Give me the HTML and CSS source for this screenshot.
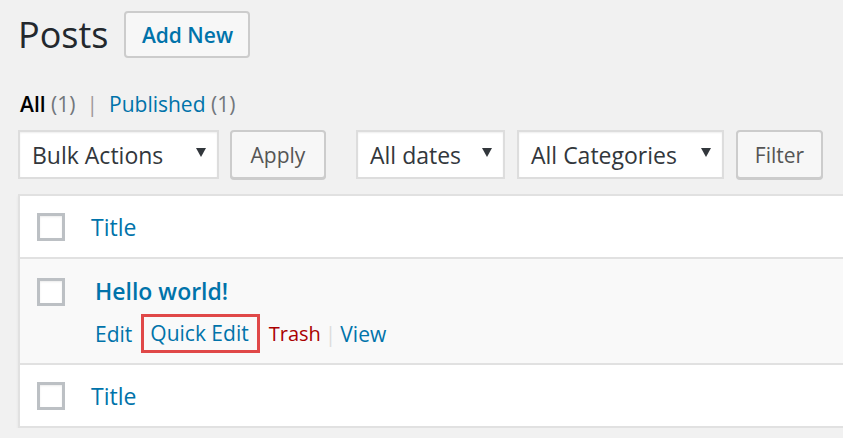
FILE: index.html
```html
<!DOCTYPE html>
<html>
<head>
<meta charset="utf-8">
<link rel="stylesheet" href="styles.css">
</head>
<body>
<div class="wrap">
  <div class="head">
    <h1 class="title">Posts</h1>
    <a class="btn btn-add">Add New</a>
  </div>
  <ul class="subsub">
    <li><span class="current">All</span> <span class="count">(1)</span></li>
    <li class="sep">|</li>
    <li><a class="link">Published <span class="count">(1)</span></a></li>
  </ul>
  <div class="nav">
    <div class="select w-bulk"><span>Bulk Actions</span><svg class="arrow" width="10" height="9" viewBox="0 0 10 9"><path d="M0 0H10L5 9Z" fill="#32373c"/></svg></div>
    <a class="btn btn-apply">Apply</a>
    <div class="select w-dates"><span>All dates</span><svg class="arrow" width="10" height="9" viewBox="0 0 10 9"><path d="M0 0H10L5 9Z" fill="#32373c"/></svg></div>
    <div class="select w-cats"><span>All Categories</span><svg class="arrow" width="10" height="9" viewBox="0 0 10 9"><path d="M0 0H10L5 9Z" fill="#32373c"/></svg></div>
    <a class="btn btn-filter">Filter</a>
  </div>
  <div class="table">
    <div class="row row-head">
      <span class="cb"></span>
      <a class="col-title">Title</a>
    </div>
    <div class="row row-post">
      <span class="cb"></span>
      <div class="post-main">
        <a class="row-title">Hello world!</a>
        <div class="actions">
          <a class="act">Edit</a>
          <a class="act act-quick">Quick Edit</a>
          <a class="act act-trash">Trash</a>
          <span class="act-sep">|</span>
          <a class="act">View</a>
        </div>
      </div>
    </div>
    <div class="row row-head">
      <span class="cb"></span>
      <a class="col-title">Title</a>
    </div>
  </div>
</div>
</body>
</html>
```

FILE: styles.css
```css
html, body {
  margin: 0;
  padding: 0;
  background: #f1f1f1;
  overflow: hidden;
}
body {
  font-family: "Open Sans", "Noto Sans", sans-serif;
  color: #23282d;
}
.wrap {
  padding: 11px 0 0 18px;
}
.head {
  display: flex;
  align-items: center;
  height: 47px;
}
.title {
  margin: 0 16px 0 0;
  font-size: 36px;
  font-weight: 400;
  line-height: 1;
  color: #23282d;
}
.btn {
  box-sizing: border-box;
  display: flex;
  align-items: center;
  justify-content: center;
  background: #f7f7f7;
  border: 2px solid #cccccc;
  border-radius: 4px;
  text-decoration: none;
}
.btn-add {
  width: 126px;
  height: 47px;
  font-size: 21px;
  font-weight: 600;
  color: #0073aa;
}
.subsub {
  list-style: none;
  margin: 32px 0 0 2px;
  padding: 0;
  display: flex;
  gap: 10px;
  font-size: 21px;
  line-height: 29px;
}
.subsub li {
  white-space: pre;
}
.current {
  font-weight: 600;
  color: #000;
}
.count {
  color: #72777c;
}
.subsub .sep {
  color: #a09a9a;
  margin: 0 1px;
}
.link {
  color: #0073aa;
}
.link .count {
  color: #72777c;
}
.nav {
  display: flex;
  margin-top: 11px;
  height: 50px;
}
.select {
  box-sizing: border-box;
  height: 49px;
  background: #fff;
  border: 2px solid #dddddd;
  box-shadow: inset 0 1px 2px rgba(0,0,0,.07);
  display: flex;
  align-items: center;
  justify-content: space-between;
  padding: 0 11px 0 12px;
  font-size: 23px;
  color: #32373c;
}
.arrow {
  margin-top: -4px;
}
.w-bulk { width: 201px; }
.w-dates { width: 149px; margin-left: 30px; }
.w-cats { width: 207px; margin-left: 12px; }
.btn-apply, .btn-filter {
  height: 49px;
  font-size: 21px;
  color: #555;
  box-shadow: 0 1px 0 #cccccc;
}
.btn-apply { width: 96px; margin-left: 11px; }
.btn-filter { width: 87px; margin-left: 12px; }
.table {
  margin-top: 14px;
  margin-right: -40px;
  background: #fff;
  border: 2px solid #e1e1e1;
  border-right: none;
  box-shadow: 0 2px 3px rgba(0,0,0,.06);
}
.row {
  display: flex;
  padding-left: 17px;
}
.row-head {
  height: 61px;
  align-items: center;
}
.cb {
  box-sizing: border-box;
  width: 28px;
  height: 28px;
  flex: none;
  border: 3px solid #bcc0c4;
  background: #fff;
  box-shadow: inset 0 1px 2px rgba(0,0,0,.08);
}
.col-title {
  margin-left: 26px;
  font-size: 23px;
  color: #0073aa;
}
.row-post {
  background: #f9f9f9;
  border-top: 2px solid #e1e1e1;
  border-bottom: 2px solid #e1e1e1;
  padding-top: 19px;
  box-sizing: content-box;
  height: 85px;
}
.post-main {
  margin-left: 30px;
  margin-top: -3px;
}
.row-title {
  display: block;
  font-size: 23px;
  font-weight: 600;
  color: #0073aa;
  line-height: 32px;
}
.actions {
  display: flex;
  align-items: center;
  margin-top: 7px;
  font-size: 21px;
  line-height: 28px;
}
.act {
  color: #0073aa;
}
.act-quick {
  margin: 0 9px 0 9px;
  border: 3px solid #e04848;
  padding: 2px 8px 3px 6px;
}
.act-trash {
  color: #a00;
  font-size: 20px;
}
.act-sep {
  color: #ddd;
  margin: 0 4px;
}
```
